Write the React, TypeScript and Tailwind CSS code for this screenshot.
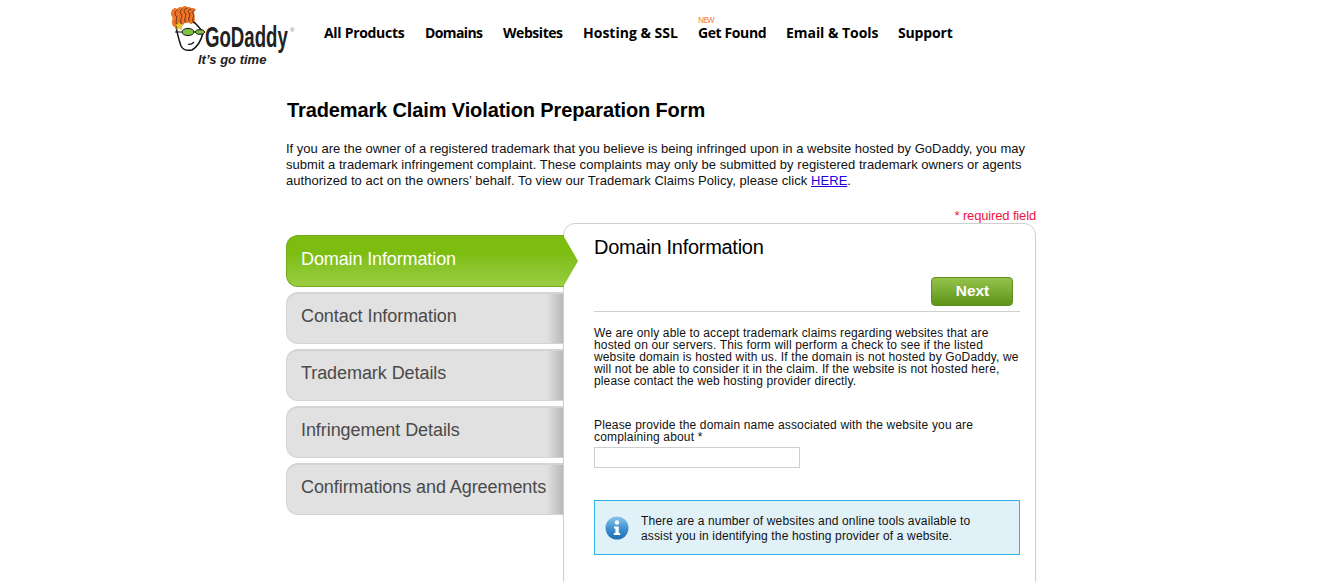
const navItems = [
  { label: 'All Products', cls: 'w-[81px] tracking-[-0.3px]' },
  { label: 'Domains', cls: 'w-[58px] tracking-[-0.6px]' },
  { label: 'Websites', cls: 'w-[60px] tracking-[-0.45px]' },
  { label: 'Hosting & SSL', cls: 'w-[95px] tracking-[0px]' },
  { label: 'Get Found', cls: 'w-[68px] tracking-[-0.4px]' },
  { label: 'Email & Tools', cls: 'w-[92px] tracking-[-0.05px]' },
  { label: 'Support', cls: 'w-[54px] tracking-[-0.15px]' },
]
const otherSteps = ['Contact Information', 'Trademark Details', 'Infringement Details', 'Confirmations and Agreements']
const flames = [
  'M5 19 C2 16 6 13 4 10 C2 8 3 5 5 4',
  'M9 17 C7 14 11 11 9 8 C7 6 8 4 10 3',
  'M13 16 C11 13 15 10 13 7 C11 5 12 3 15 2',
  'M17 15 C15 12 19 10 17 7 C15 5 16 4 19 3',
  'M21 16 C19 13 23 11 21 8 C19 6 20 5 23 4',
]

function Logo() {
  return (
    <svg width="130" height="62" viewBox="0 0 130 62" className="block">
      {/* hair backing */}
      <path d="M2 6 C8 1 18 0 24 4 L25 17 L6 21 Z" fill="#f0742a" />
      {/* head */}
      <path d="M6 20 C11 16 19 14 25 17 C28 20 31 23 33 27 C31 35 27 41 22 44 C17 45 13 44 11 40 C9 34 7 27 6 20 Z" fill="#fff" stroke="#111" strokeWidth="1.5" />
      <path d="M24 36 C22 38 20 39 18 38" fill="none" stroke="#111" strokeWidth="1.1" />
      {/* hair */}
      {flames.map((d) => (
        <path key={d} d={d} fill="none" stroke="#f0742a" strokeWidth="4" strokeLinecap="round" />
      ))}
      {flames.map((d) => (
        <path key={d + 'k'} d={d} fill="none" stroke="#5a2c10" strokeWidth="0.9" strokeLinecap="round" transform="translate(2.2 0)" />
      ))}
      {/* shades */}
      <path d="M5 26 L12 26 M23 26 L26 26" stroke="#111" strokeWidth="1.2" />
      <ellipse cx="18" cy="26" rx="6" ry="3.6" fill="#7fc241" stroke="#111" strokeWidth="1" />
      <ellipse cx="30" cy="26" rx="4.5" ry="2.3" fill="#7fc241" stroke="#111" strokeWidth="1" />
      {/* star */}
      <path d="M9 15 L10.3 18 L13.5 18.4 L11 20.4 L11.8 23.6 L9 21.8 L6.2 23.6 L7 20.4 L4.5 18.4 L7.7 18 Z" fill="#f7c51e" stroke="#8a6a10" strokeWidth="0.4" />
      <text transform="translate(35 41) scale(0.69 1.1)" fontFamily="'Liberation Sans', sans-serif" fontWeight="700" fontSize="27" fill="#222">GoDaddy</text>
      <text x="120" y="26" fontFamily="'Liberation Sans', sans-serif" fontSize="6" fill="#777">®</text>
      <text x="28" y="58" fontFamily="'Liberation Sans', sans-serif" fontWeight="700" fontStyle="italic" fontSize="13" fill="#222">It’s go time</text>
    </svg>
  )
}

function InfoIcon() {
  return (
    <svg width="24" height="24" viewBox="0 0 24 24" className="shrink-0">
      <defs>
        <linearGradient id="infoFill" x1="0" y1="0" x2="0" y2="1">
          <stop offset="0" stopColor="#8cc4ea" />
          <stop offset="0.55" stopColor="#3c8fd0" />
          <stop offset="1" stopColor="#1f6db0" />
        </linearGradient>
      </defs>
      <circle cx="12" cy="12" r="11.5" fill="url(#infoFill)" />
      <circle cx="12" cy="6.5" r="2.2" fill="#fff" />
      <path d="M9 10.5 H13.8 V17 H15.2 V19 H8.8 V17 H10.4 V12.5 H9 Z" fill="#fff" />
    </svg>
  )
}

export default function App() {
  return (
    <div className="h-[582px] overflow-hidden bg-white font-['Liberation_Sans',Arial,sans-serif] text-[12px] text-[#1a1a1a]">
      {/* header */}
      <div className="flex h-[94px] pl-[170px] pt-[6px]">
        <Logo />
        <nav className="ml-[24px] flex h-[54px] items-center gap-[20px] font-['Open_Sans',sans-serif] text-[14px] font-bold leading-[16px] text-black">
          {navItems.map((item) => (
            <div key={item.label} className={`relative whitespace-nowrap ${item.cls}`}>
              {item.label === 'Get Found' && (
                <span className="absolute -top-[9px] left-0 text-[8px] font-semibold leading-none tracking-[-0.9px] text-[#f5945a]">NEW</span>
              )}
              {item.label}
            </div>
          ))}
        </nav>
      </div>

      <div className="ml-[286px] w-[750px]">
        <h1 className="pl-px text-[20px] font-bold leading-[32px] tracking-[-0.12px] text-black">Trademark Claim Violation Preparation Form</h1>
        <p className="mt-[15px] whitespace-nowrap text-[13px] leading-[16px] text-[#111]">
          If you are the owner of a registered trademark that you believe is being infringed upon in a website hosted by GoDaddy, you may<br />
          <span className="tracking-[0.025px]">submit a trademark infringement complaint. These complaints may only be submitted by registered trademark owners or agents</span><br />
          <span className="tracking-[0.055px]">authorized to act on the owners’ behalf. To view our Trademark Claims Policy, please click <a href="#" className="text-[#2200dd] underline">HERE</a>.</span>
        </p>
        <div className="mt-[20px] text-right text-[13px] leading-[14px] tracking-[-0.15px] text-[#ee1144]">* required field</div>

        <div className="flex">
          {/* steps */}
          <div className="flex w-[277px] shrink-0 flex-col gap-[5px] pt-[12px]">
            <div className="relative z-10 flex h-[52px] w-[278px] items-center rounded-l-[12px] border border-r-0 border-[#74ab1a] bg-gradient-to-b from-[#7dbd10] from-35% to-[#9acd40] pb-[4px] pl-[14px] text-[18px] tracking-[-0.12px] text-white">
              Domain Information
              <span className="absolute -right-[14px] -top-px h-[52px] w-[15px] bg-gradient-to-b from-[#7dbd10] from-35% to-[#9acd40] [clip-path:polygon(0_0,100%_50%,0_100%)]" />
            </div>
            {otherSteps.map((step) => (
              <div key={step} className="flex h-[52px] items-center rounded-l-[12px] border border-t-2 border-r-0 border-[#d4d4d4] bg-[linear-gradient(to_right,#e1e1e1_0,#e1e1e1_94%,#b8b8b8_100%)] pb-[4px] pl-[14px] text-[18px] tracking-[-0.07px] text-[#4a4a4a]">
                {step}
              </div>
            ))}
          </div>

          {/* form panel */}
          <div className="h-[500px] w-[473px] rounded-t-[12px] border border-[#cfcfcf] bg-white pl-[30px] pr-[15px]">
            <h2 className="pt-[10px] text-[20px] leading-[26px] tracking-[-0.28px] text-black">Domain Information</h2>
            <div className="mt-[17px] flex justify-end pr-[7px]">
              <button className="h-[29px] w-[82px] rounded-[4px] border border-[#5e8f1c] bg-gradient-to-b from-[#95c34a] to-[#5e9415] pb-[2px] pl-[1px] text-[15.5px] font-bold text-white">Next</button>
            </div>
            <div className="mt-[5px] h-px bg-[#cfcfcf]" />
            <p className="mt-[15px] text-[12px] leading-[12px] tracking-[0.14px] text-[#111]">
              We are only able to accept trademark claims regarding websites that are hosted on our servers. This form will perform a check to see if the listed website domain is hosted with us. If the domain is not hosted by GoDaddy, we will not be able to consider it in the claim. If the website is not hosted here, please contact the web hosting provider directly.
            </p>
            <label className="mt-[32px] block text-[12px] leading-[12px] tracking-[0.165px] text-[#111]">
              Please provide the domain name associated with the website you are complaining about *
            </label>
            <input className="mt-[4px] block h-[21px] w-[206px] border border-[#cfcfcf] bg-white" />
            <div className="mt-[32px] flex h-[55px] items-center gap-[12px] border border-[#2db2e8] bg-[#e1f1f8] pl-[10px]">
              <InfoIcon />
              <p className="pt-[3px] text-[12px] leading-[15px] tracking-[0.14px] text-[#111]">
                There are a number of websites and online tools available to<br />assist you in identifying the hosting provider of a website.
              </p>
            </div>
          </div>
        </div>
      </div>
    </div>
  )
}
